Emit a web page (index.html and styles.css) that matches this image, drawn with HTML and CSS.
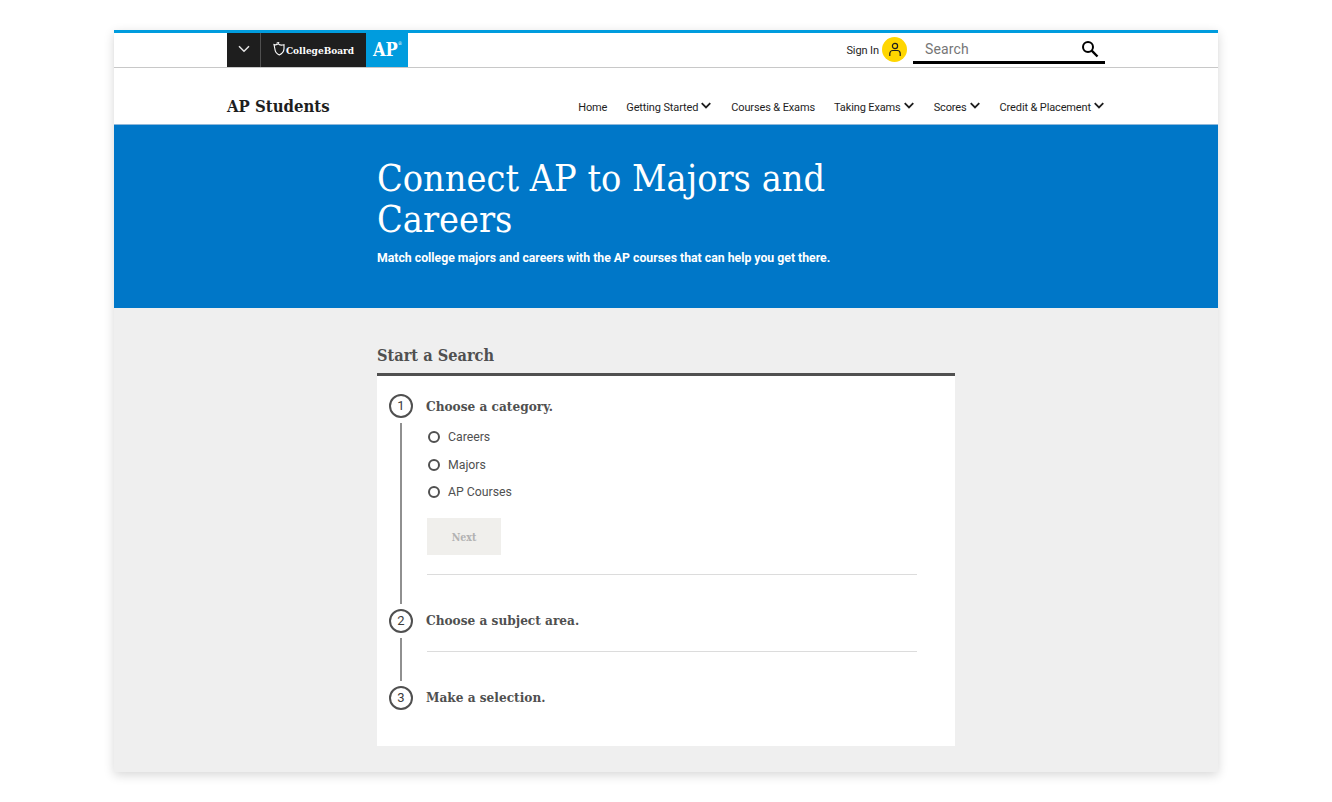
FILE: index.html
```html
<!DOCTYPE html>
<html lang="en">
<head>
<meta charset="utf-8">
<title>Connect AP to Majors and Careers</title>
<link rel="stylesheet" href="styles.css">
</head>
<body>
<div class="frame">
  <header class="topbar">
    <div class="topbar-inner">
      <div class="brand">
        <button class="brand-toggle" aria-label="Menu">
          <svg width="12" height="8" viewBox="0 0 12 8"><path d="M1 1.300l5 5 5-5" fill="none" stroke="#e6e6e6" stroke-width="1.500"/></svg>
        </button>
        <div class="brand-cb">
          <svg class="shield" width="12" height="14" viewBox="0 0 12 14"><path d="M1 2.600c1.600.6 3 .3 4.400-.9C6 3 8.500 3.400 11 2.800V6.500c0 3-2.200 5.300-4.700 6.500C3.300 11.600 2 9 1.800 6.500z" fill="none" stroke="#fff" stroke-width="1.100"/><path d="M3.400 1.200L6.500 0" stroke="#fff" fill="none"/></svg>
          <span class="cb-text">CollegeBoard</span>
        </div>
        <div class="brand-ap">AP<sup class="reg">®</sup></div>
      </div>
      <div class="tools">
        <a class="signin">Sign In</a>
        <span class="avatar">
          <svg width="14" height="15" viewBox="0 0 14 15"><circle cx="7" cy="4" r="2.600" fill="none" stroke="#1e1e1e" stroke-width="1.200"/><path d="M1.800 14v-2.500c0-1.700 1.300-3 3-3h4.400c1.700 0 3 1.300 3 3V14" fill="none" stroke="#1e1e1e" stroke-width="1.200"/></svg>
        </span>
        <div class="search">
          <span class="search-label">Search</span>
          <svg width="18" height="18" viewBox="0 0 18 18"><circle cx="7" cy="7" r="5" fill="none" stroke="#000" stroke-width="2"/><path d="M10.700 10.700l5.800 5.800" stroke="#000" stroke-width="2.400"/></svg>
        </div>
      </div>
    </div>
  </header>

  <nav class="sitenav">
    <div class="sitenav-inner">
      <div class="site-title">AP Students</div>
      <ul class="menu">
        <li>Home</li>
        <li>Getting Started<svg class="chev" width="10" height="7" viewBox="0 0 11 7"><path d="M.8 1l4.700 4.700L10.200 1" fill="none" stroke="#1e1e1e" stroke-width="2"/></svg></li>
        <li>Courses &amp; Exams</li>
        <li>Taking Exams<svg class="chev" width="10" height="7" viewBox="0 0 11 7"><path d="M.8 1l4.700 4.700L10.200 1" fill="none" stroke="#1e1e1e" stroke-width="2"/></svg></li>
        <li>Scores<svg class="chev" width="10" height="7" viewBox="0 0 11 7"><path d="M.8 1l4.700 4.700L10.200 1" fill="none" stroke="#1e1e1e" stroke-width="2"/></svg></li>
        <li>Credit &amp; Placement<svg class="chev" width="10" height="7" viewBox="0 0 11 7"><path d="M.8 1l4.700 4.700L10.200 1" fill="none" stroke="#1e1e1e" stroke-width="2"/></svg></li>
      </ul>
    </div>
  </nav>

  <section class="hero">
    <h1>Connect AP to Majors and Careers</h1>
    <p>Match college majors and careers with the AP courses that can help you get there.</p>
  </section>

  <main class="content">
    <h2>Start a Search</h2>
    <div class="card">
      <div class="step step-one">
        <div class="rail"><span class="num">1</span><span class="line"></span></div>
        <div class="body">
          <h3>Choose a category.</h3>
          <label class="radio"><span class="dot"></span>Careers</label>
          <label class="radio"><span class="dot"></span>Majors</label>
          <label class="radio"><span class="dot"></span>AP Courses</label>
          <div class="next">Next</div>
        </div>
      </div>
      <div class="step step-two">
        <div class="rail"><span class="num">2</span><span class="line"></span></div>
        <div class="body"><h3>Choose a subject area.</h3></div>
      </div>
      <div class="step step-three">
        <div class="rail"><span class="num">3</span></div>
        <div class="body"><h3>Make a selection.</h3></div>
      </div>
    </div>
  </main>
</div>
</body>
</html>
```
FILE: styles.css
```css
* { box-sizing: border-box; }
html, body { margin: 0; padding: 0; background: #fff; }
body { padding: 30px 114px; font-family: Roboto, "Liberation Sans", sans-serif; color: #1e1e1e; }
.frame { width: 1104px; height: 742px; background: #efefef; box-shadow: 0 3px 10px rgba(0,0,0,.16); display: flex; flex-direction: column; }

.topbar { height: 38px; background: #fff; border-top: 3px solid #009cde; border-bottom: 1px solid #c8c8c8; box-shadow: 0 1px 1px rgba(0,0,0,.06); }
.topbar-inner { width: 878px; margin-left: 113px; height: 34px; display: flex; justify-content: space-between; }
.brand { display: flex; height: 34px; }
.brand-toggle { width: 34px; padding: 0; border: 0; border-right: 1px solid #505050; background: #1e1e1e; display: flex; align-items: center; justify-content: center; padding-bottom: 3px; }
.brand-cb { width: 105px; margin: 0; background: #1e1e1e; color: #fff; display: flex; align-items: center; justify-content: center; gap: 1px; }
.shield { margin-top: -3px; }
.cb-text { font-family: "DejaVu Serif", serif; font-stretch: condensed; font-weight: 700; font-size: 10px; }
.brand-ap { width: 42px; background: #009cde; color: #fff; font-family: "DejaVu Serif", serif; font-stretch: condensed; font-weight: 700; font-size: 18px; display: flex; align-items: center; justify-content: center; padding: 0 0 2px 1px; }
.reg { font-size: 5px; line-height: 1; align-self: flex-start; margin-top: 8px; font-weight: 400; }

.tools { display: flex; align-items: flex-start; }
.signin { font-size: 11px; letter-spacing: -.1px; line-height: 14px; margin-top: 11px; color: #1e1e1e; }
.avatar { width: 25px; height: 25px; margin: 4px 0 0 3px; border-radius: 50%; background: #ffd600; display: flex; align-items: center; justify-content: center; }
.search { width: 192px; height: 31px; margin-left: 6px; border-bottom: 3px solid #000; display: flex; justify-content: space-between; align-items: flex-start; padding: 7px 6px 0 12px; }
.search-label { font-size: 14px; line-height: 18px; letter-spacing: .15px; color: #767676; }

.sitenav { height: 57px; background: #fff; border-bottom: 1px solid #8fb8da; }
.sitenav-inner { width: 878px; margin-left: 113px; display: flex; justify-content: space-between; }
.site-title { font-family: "DejaVu Serif", serif; font-stretch: condensed; font-weight: 700; font-size: 16.600px; line-height: 24px; margin-top: 26px; color: #1e1e1e; }
.menu { list-style: none; margin: 32px 0 0; padding: 0; display: flex; gap: 19px; font-size: 11px; letter-spacing: -.13px; line-height: 16px; }
.menu li { display: flex; align-items: flex-start; white-space: nowrap; }
.chev { margin: 2px 1px 0 3px; }

.hero { height: 183px; background: #0077c8; color: #fff; padding: 33px 0 0 263px; }
.hero h1 { margin: 0; width: 500px; font-family: "DejaVu Serif", serif; font-stretch: condensed; font-weight: 400; font-size: 37.500px; line-height: 41px; }
.hero p { margin: 9px 0 0; font-size: 12.280px; line-height: 18px; font-weight: 700; }

.content { flex: 1; width: 578px; margin-left: 263px; padding-top: 35px; }
.content h2 { margin: 0; height: 33px; font-family: "DejaVu Serif", serif; font-stretch: condensed; font-weight: 700; font-size: 16.200px; line-height: 26px; color: #505050; border-bottom: 3px solid #505050; }
.card { height: 370px; background: #fff; padding: 18px 38px 0 12px; color: #505050; }
.step { display: flex; gap: 13px; }
.step-one { height: 215px; }
.step-two { height: 77px; }
.rail { width: 24px; display: flex; flex-direction: column; align-items: center; flex: none; }
.num { width: 24px; height: 24px; flex: none; border: 2px solid #505050; border-radius: 50%; font-size: 13px; line-height: 20px; text-align: center; color: #3c3c3c; }
.line { width: 2px; flex: 1; background: #909090; margin: 5px 0; }
.body { flex: 1; margin-left: 1px; }
.step-one .body, .step-two .body { border-bottom: 1px solid #dcdcdc; }
.step-one .body { height: 181px; }
.step-two .body { height: 43px; }
.body h3 { margin: 0 0 0 -1px; font-family: "DejaVu Serif", serif; font-stretch: condensed; font-weight: 700; font-size: 13.500px; line-height: 23px; color: #505050; }
.step-one h3 { line-height: 25px; margin-bottom: 4.300px; }
.radio { display: flex; align-items: center; height: 27.500px; font-size: 12.300px; letter-spacing: -.02px; color: #505050; padding-left: 1px; }
.dot { width: 12px; height: 12px; border: 2px solid #505050; border-radius: 50%; margin-right: 8px; flex: none; background: #fff; }
.next { width: 74px; height: 37px; margin-top: 12.700px; padding-top: 1px; background: #f0efec; color: #b2b2b2; font-family: "DejaVu Serif", serif; font-stretch: condensed; font-weight: 700; font-size: 10.500px; display: flex; align-items: center; justify-content: center; }
```
